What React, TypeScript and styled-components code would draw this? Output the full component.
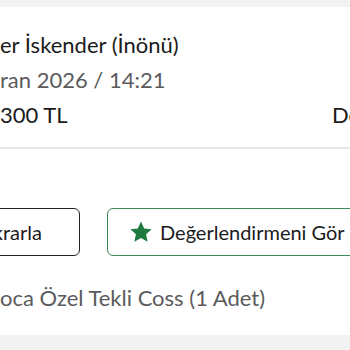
import React from "react";
import styled, { createGlobalStyle } from "styled-components";

const Global = createGlobalStyle`
  html, body { margin: 0; padding: 0; background: #f2f2f3; overflow: hidden; }
  body { font-family: Lato, "Noto Sans", sans-serif; width: 350px; height: 350px; }
`;

const Page = styled.div`
  display: flex;
  flex-direction: column;
  padding-top: 7px;
  width: 350px;
  height: 350px;
  overflow: hidden;
`;

const Card = styled.section`
  background: #fff;
  display: flex;
  flex-direction: column;
`;

const Info = styled.div`
  display: flex;
  flex-direction: column;
  gap: 9px;
  padding: 25px 0 19px 0;
  border-bottom: 2px solid #e7e7e8;
`;

const Line = styled.div<{ $muted?: boolean }>`
  font-size: 22px;
  line-height: 26px;
  color: ${(p) => (p.$muted ? "#5b5b5d" : "#1b1b1c")};
  white-space: nowrap;
`;

const PriceRow = styled.div`
  display: grid;
  grid-template-columns: 332px auto;
  font-size: 22px;
  line-height: 26px;
  color: #1b1b1c;
  white-space: nowrap;
`;

const Actions = styled.div`
  display: flex;
  flex-direction: column;
  padding: 59px 0 24px 0;
  gap: 29px;
`;

const ButtonRow = styled.div`
  display: flex;
  gap: 27px;
`;

const Button = styled.button<{ $tone: "dark" | "green"; $width: number }>`
  flex: none;
  width: ${(p) => p.$width}px;
  height: 48px;
  box-sizing: border-box;
  border-radius: 6px;
  border: 1.5px solid ${(p) => (p.$tone === "dark" ? "#222224" : "#3f8a5a")};
  background: #fff;
  font-family: Lato, "Noto Sans", sans-serif;
  font-size: 20px;
  color: #1b1b1c;
  display: flex;
  align-items: center;
  gap: 7px;
  padding: 0 0 0 21px;
  white-space: nowrap;
`;

const LeftButton = styled(Button)`
  margin-left: -40px;
  justify-content: flex-end;
  padding: 0 37px 0 0;
`;

const ItemText = styled.div`
  font-size: 22px;
  line-height: 26px;
  color: #5b5b5d;
  white-space: nowrap;
`;

const Star = () => (
  <svg width="24" height="24" viewBox="0 0 24 24" aria-hidden="true">
    <path
      d="M12 1.5l3.2 6.9 7.4.8-5.5 5.1 1.5 7.4L12 18l-6.6 3.7 1.5-7.4L1.4 9.2l7.4-.8z"
      fill="#1f7a3f"
    />
  </svg>
);

export default function App() {
  return (
    <>
      <Global />
      <Page>
        <Card>
          <Info>
            <Line>er İskender (İnönü)</Line>
            <Line $muted>ran 2026 / 14:21</Line>
            <PriceRow>
              <span>300 TL</span>
              <span>Detay</span>
            </PriceRow>
          </Info>
          <Actions>
            <ButtonRow>
              <LeftButton $tone="dark" $width={120}>krarla</LeftButton>
              <Button $tone="green" $width={280}>
                <Star />
                Değerlendirmeni Gör
              </Button>
            </ButtonRow>
            <ItemText>oca Özel Tekli Coss (1 Adet)</ItemText>
          </Actions>
        </Card>
      </Page>
    </>
  );
}
